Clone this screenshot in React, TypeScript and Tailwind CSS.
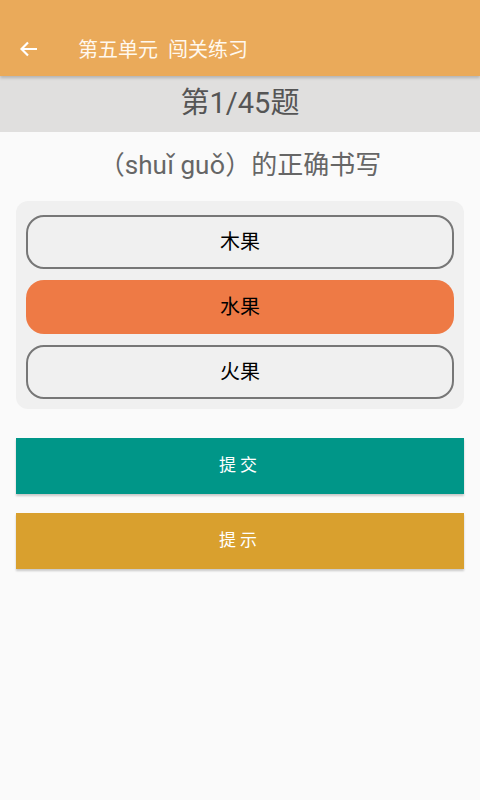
const font = "font-['Roboto','Noto_Sans_CJK_SC',sans-serif]";

const options = [
  { label: "木果", selected: false },
  { label: "水果", selected: true },
  { label: "火果", selected: false },
];

export default function App() {
  return (
    <div className={`w-[480px] h-[800px] bg-[#fafafa] flex flex-col ${font}`}>
      <header className="h-[76px] bg-[#eaaa5a] flex items-end pb-[13px] shadow-[0_2px_3px_rgba(0,0,0,0.2)] relative z-10">
        <svg className="ml-[20px] mb-[6px]" width="18" height="16" viewBox="0 0 18 16" fill="none">
          <path d="M17 8H2M8 1.5L1.5 8 8 14.5" stroke="#fff" strokeWidth="2.2" />
        </svg>
        <span className="ml-[40px] text-[20px] leading-[26px] text-[#fff8ee]">第五单元&nbsp;&nbsp;闯关练习</span>
      </header>

      <div className="h-[56px] bg-[#e0dfde] flex items-center justify-center text-[29px] text-[#555]">
        第1/45题
      </div>

      <p className="mt-[17px] text-center text-[26px] leading-[32px] text-[#666]">（shuǐ guǒ）的正确书写</p>

      <div className="mx-[16px] mt-[20px] bg-[#f0f0f0] rounded-[12px] px-[10px] pt-[14px] pb-[10px] flex flex-col gap-[11px]">
        {options.map((o) => (
          <div
            key={o.label}
            className={
              o.selected
                ? "h-[54px] rounded-[18px] bg-[#ee7a45] flex items-center justify-center text-[20px] text-black"
                : "h-[54px] rounded-[18px] border-2 border-[#777] bg-[#f0f0f0] flex items-center justify-center text-[20px] text-black"
            }
          >
            {o.label}
          </div>
        ))}
      </div>

      <button className="mx-[16px] mt-[29px] h-[56px] bg-[#009688] text-white text-[17px] tracking-[4px] shadow-[0_2px_2px_rgba(0,0,0,0.2)]">
        提交
      </button>
      <button className="mx-[16px] mt-[19px] h-[56px] bg-[#d9a02e] text-white text-[17px] tracking-[4px] shadow-[0_2px_2px_rgba(0,0,0,0.2)]">
        提示
      </button>
    </div>
  );
}
